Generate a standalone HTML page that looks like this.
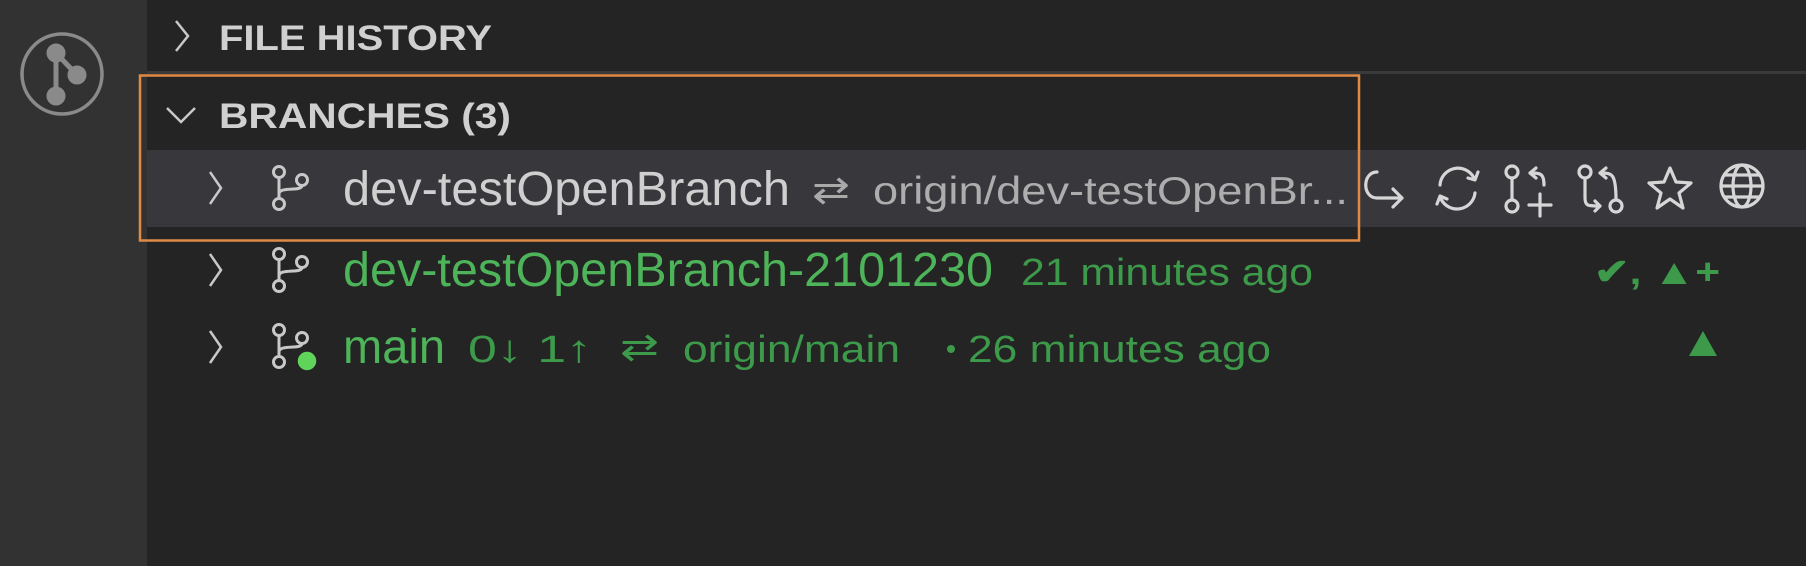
<!DOCTYPE html>
<html><head><meta charset="utf-8"><style>
html,body{margin:0;padding:0;background:#242424;width:1806px;height:566px;overflow:hidden}
svg{display:block}
text{font-family:"Liberation Sans",sans-serif}
</style></head><body>
<svg width="1806" height="566" viewBox="0 0 1806 566" xmlns="http://www.w3.org/2000/svg">
<rect width="1806" height="566" fill="#242424"/>
<rect width="147" height="566" fill="#323232"/>
<!-- activity icon -->
<circle cx="62" cy="74" r="40" fill="none" stroke="#8a8a8a" stroke-width="3.5"/>
<g fill="#8a8a8a" stroke="#8a8a8a" stroke-width="5">
<line x1="56" y1="53" x2="56" y2="96"/><line x1="56" y1="53" x2="77" y2="75"/>
<circle cx="56" cy="53" r="7"/><circle cx="77" cy="75" r="7"/><circle cx="56" cy="96" r="7"/>
</g>
<!-- divider -->
<rect x="147" y="71" width="1659" height="3" fill="#3a3a3a"/>
<!-- header file history -->
<path d="M176 21 L188 36 L176 51" fill="none" stroke="#c8c8c8" stroke-width="2.5"/>
<text x="219" y="50" font-size="35" font-weight="bold" fill="#d0d0d0" textLength="273" lengthAdjust="spacingAndGlyphs">FILE HISTORY</text>
<!-- branches header -->
<path d="M167 108 L181 122 L195 108" fill="none" stroke="#c8c8c8" stroke-width="2.5"/>
<text x="219" y="128" font-size="35" font-weight="bold" fill="#d0d0d0" textLength="292" lengthAdjust="spacingAndGlyphs">BRANCHES (3)</text>
<!-- selected row -->
<rect x="147" y="150" width="1659" height="77" fill="#37373c"/>
<!-- branch icon def -->
<defs>
<g id="br" fill="none" stroke="#c8c8c8" stroke-width="3">
<circle cx="8" cy="6" r="5.5"/><circle cx="8" cy="38" r="5.5"/><circle cx="31" cy="14" r="5.5"/>
<path d="M8 11.5 V32.5 M8 28 C8 20 31 26 31 19.5"/>
</g>
</defs>
<!-- row 1 -->
<path d="M210 172 L221 188 L210 204" fill="none" stroke="#c8c8c8" stroke-width="2.5"/>
<use href="#br" x="271" y="166"/>
<text x="343" y="205" font-size="48" fill="#cfcfcf" textLength="447" lengthAdjust="spacingAndGlyphs">dev-testOpenBranch</text>
<text x="812" y="203" font-size="38" fill="#a9a9a9" textLength="38" lengthAdjust="spacingAndGlyphs">⇄</text>
<text x="873" y="204" font-size="39" fill="#adadad" textLength="475" lengthAdjust="spacingAndGlyphs">origin/dev-testOpenBr...</text>
<!-- orange box -->
<rect x="140" y="75.5" width="1219" height="165" fill="none" stroke="#e08a45" stroke-width="2.5"/>
<!-- action icons -->
<g fill="none" stroke="#d6d6d6" stroke-width="3.2" stroke-linecap="round" stroke-linejoin="round">
<path d="M1377 172 C1362 172 1362 198 1377 198 H1402 M1393 189 L1402 198 L1393 207"/>
<path d="M1440 185 A18 18 0 0 1 1474 178 M1468 178 L1475 180 L1478 172 M1475 193 A18 18 0 0 1 1441 199 M1447 199 L1440 196 L1437 204"/>
<circle cx="1512" cy="172" r="6"/><circle cx="1512" cy="206" r="6"/><path d="M1512 178 V200 M1540 216 V194 M1529 205 H1551 M1536 168 L1530 173 L1536 178 M1530 173 C1540 173 1544 173 1544 185"/>
<circle cx="1585" cy="172" r="6"/><circle cx="1616" cy="206" r="6"/><path d="M1585 178 V198 C1585 206 1588 206 1600 206 M1595 201 L1600 206 L1595 211 M1606 168 L1600 173 L1606 178 M1600 173 C1612 173 1616 173 1616 200"/>
<path d="M1670 168 L1676 182 L1691 183 L1679 193 L1683 208 L1670 199 L1657 208 L1661 193 L1649 183 L1664 182 Z"/>
<circle cx="1742" cy="186" r="21"/><ellipse cx="1742" cy="186" rx="9" ry="21"/><path d="M1721 186 H1763 M1725 175 H1759 M1725 197 H1759"/>
</g>
<!-- row 2 -->
<path d="M210 254 L221 270 L210 286" fill="none" stroke="#c8c8c8" stroke-width="2.5"/>
<use href="#br" x="271" y="248"/>
<text x="343" y="286" font-size="48" fill="#4db45a" textLength="650" lengthAdjust="spacingAndGlyphs">dev-testOpenBranch-2101230</text>
<text x="1021" y="285" font-size="38" fill="#3c9a4a" textLength="292" lengthAdjust="spacingAndGlyphs">21 minutes ago</text>
<text x="1594" y="284" font-size="36" font-weight="bold" fill="#3c9a4a" textLength="126" lengthAdjust="spacingAndGlyphs">✔, ▲+</text>
<!-- row 3 -->
<path d="M210 331 L221 347 L210 363" fill="none" stroke="#c8c8c8" stroke-width="2.5"/>
<use href="#br" x="271" y="324"/>
<circle cx="307" cy="361" r="10" fill="#5fd35a" stroke="#242424" stroke-width="1.5"/>
<text x="343" y="363" font-size="48" fill="#4db45a" textLength="102" lengthAdjust="spacingAndGlyphs">main</text>
<text x="468" y="362" font-size="38" fill="#3c9a4a" textLength="124" lengthAdjust="spacingAndGlyphs">0↓ 1↑</text>
<text x="620" y="360" font-size="38" fill="#3c9a4a" textLength="39" lengthAdjust="spacingAndGlyphs">⇄</text>
<text x="683" y="362" font-size="38" fill="#3c9a4a" textLength="217" lengthAdjust="spacingAndGlyphs">origin/main</text>
<circle cx="951" cy="349" r="4" fill="#3c9a4a"/>
<text x="968" y="362" font-size="38" fill="#3c9a4a" textLength="303" lengthAdjust="spacingAndGlyphs">26 minutes ago</text>
<path d="M1703 331 L1717 356 L1689 356 Z" fill="#3c9a4a"/>
</svg>
</body></html>
